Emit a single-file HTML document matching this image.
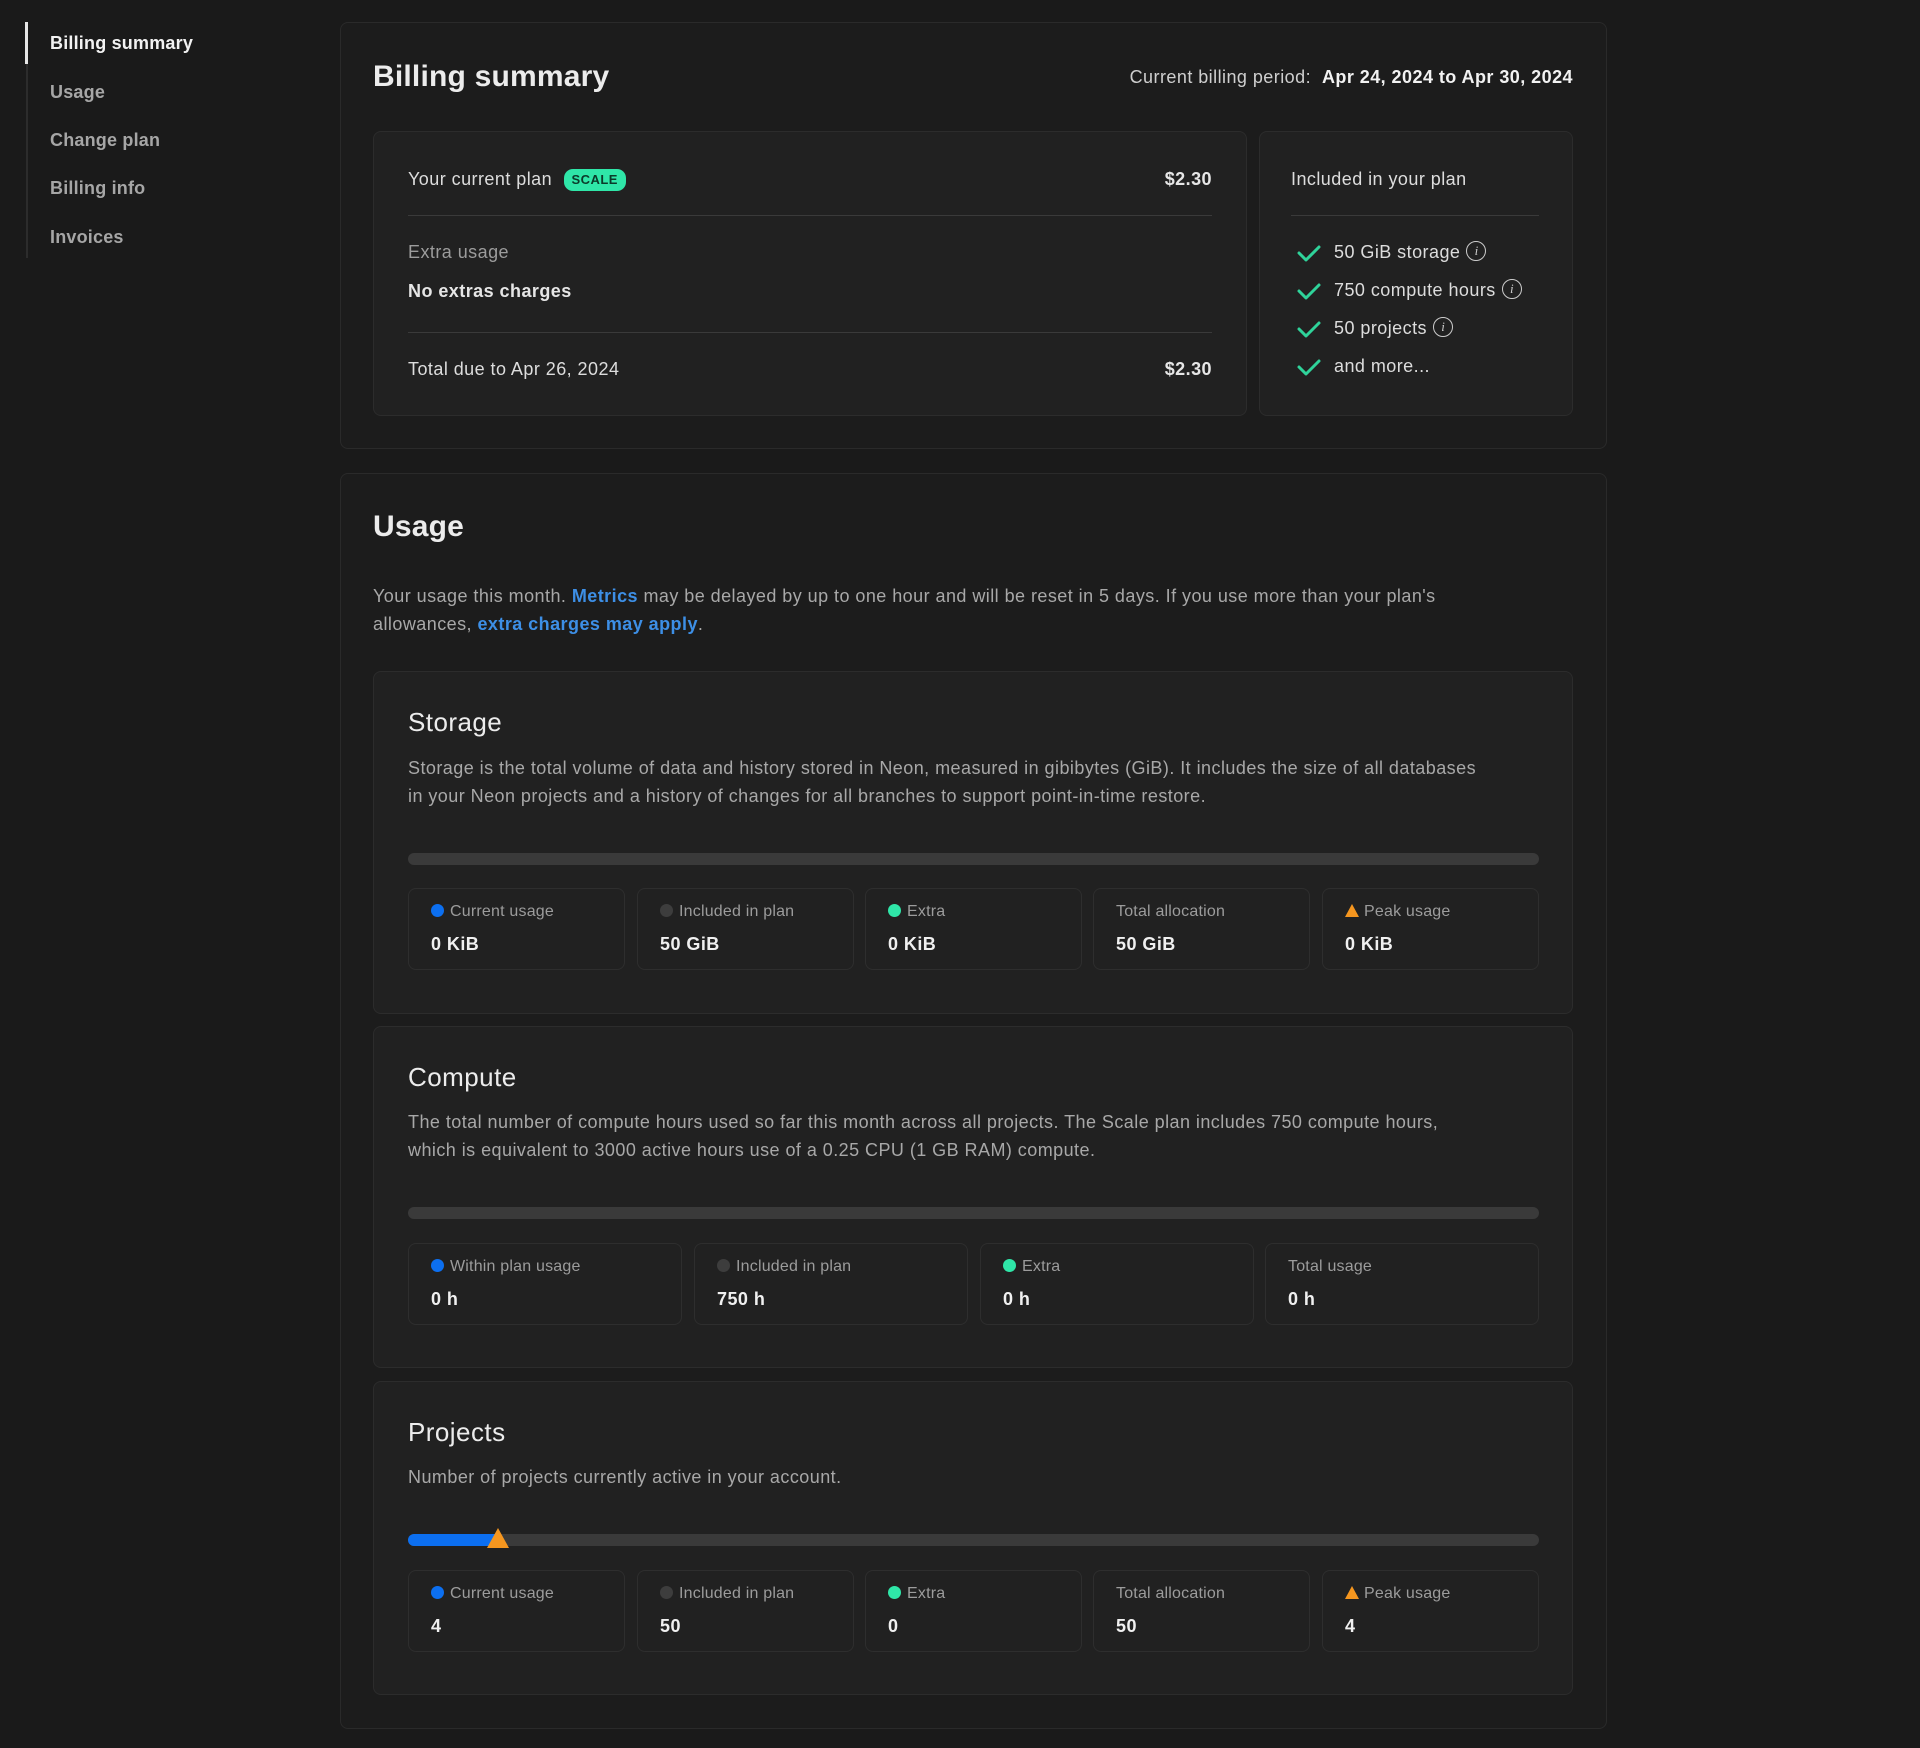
<!DOCTYPE html>
<html><head><meta charset="utf-8"><style>
*{box-sizing:border-box;margin:0;padding:0}
body{width:1920px;height:1748px;background:#1a1a1a;font-family:"Liberation Sans",sans-serif;color:#e6e6e6;position:relative;overflow:hidden;letter-spacing:0.45px}
.a{position:absolute}
.nav{left:26px;top:22px;width:2px;height:236px;background:#2c2c2c}
.navact{left:25px;top:22px;width:3px;height:42px;background:#e6e6e6}
.ni{left:50px;font-size:18px;font-weight:bold;color:#a6a6a6;line-height:22px;letter-spacing:0.2px}
.card{background:#1c1c1c;border:1px solid #2a2a2a;border-radius:8px}
.in{background:#212121;border:1px solid #2c2c2c;border-radius:8px}
.t{line-height:24px;white-space:nowrap}
.hr{height:1px;background:#3a3a3a}
.h2{font-size:30px;font-weight:bold;color:#ececec;letter-spacing:0.2px}
.h3{font-size:26px;color:#ececec}
.p{font-size:18px;color:#a8a8a8;line-height:28px;white-space:nowrap}
.p a{color:#3d8fe6;font-weight:bold;text-decoration:none}
.bar{height:12px;background:#3a3a3a;border-radius:6px;left:408px;width:1131px}
.box{background:#212121;border:1px solid #2e2e2e;border-radius:8px;height:82px}
.lb{position:absolute;left:22px;top:12px;font-size:16px;color:#9c9c9c;line-height:22px;white-space:nowrap;letter-spacing:0.2px}
.vl{position:absolute;left:22px;top:44px;font-size:18px;font-weight:bold;color:#f0f0f0;line-height:22px}
.d{display:inline-block;width:13px;height:13px;border-radius:50%;margin-right:6px;vertical-align:-1px}
.tri{display:inline-block;width:0;height:0;border-left:7px solid transparent;border-right:7px solid transparent;border-bottom:13px solid #f5961f;margin-right:5px;vertical-align:-1px}
.ii{display:inline-block;width:20px;height:20px;border:1.5px solid #ccc;border-radius:50%;font-size:13px;text-align:center;line-height:17px;font-style:italic;font-family:"Liberation Serif",serif;margin-left:6px;vertical-align:middle;position:relative;top:-2px;color:#ccc;letter-spacing:0}
</style></head><body>
<div class="a nav"></div><div class="a navact"></div>
<div class="a ni" style="top:32px;color:#f2f2f2">Billing summary</div>
<div class="a ni" style="top:81px">Usage</div>
<div class="a ni" style="top:129px">Change plan</div>
<div class="a ni" style="top:177px">Billing info</div>
<div class="a ni" style="top:226px">Invoices</div>

<div class="a card" style="left:340px;top:22px;width:1267px;height:427px"></div>
<div class="a t h2" style="left:373px;top:59px;line-height:36px">Billing summary</div>
<div class="a t" style="right:347px;top:65px;font-size:18px;color:#cfcfcf">Current billing period:&nbsp; <b style="color:#f2f2f2">Apr 24, 2024 to Apr 30, 2024</b></div>

<div class="a in" style="left:373px;top:131px;width:874px;height:285px"></div>
<div class="a t" style="left:408px;top:167px;font-size:18px;color:#ddd">Your current plan <span style="display:inline-block;background:#2fe6a8;color:#0b3a2a;font-size:13px;font-weight:bold;border-radius:9px;padding:0 8px;line-height:22px;margin-left:6px;vertical-align:1px">SCALE</span></div>
<div class="a t" style="right:708px;top:167px;font-size:18px;font-weight:bold">$2.30</div>
<div class="a hr" style="left:408px;top:215px;width:804px"></div>
<div class="a t" style="left:408px;top:240px;font-size:18px;color:#9c9c9c">Extra usage</div>
<div class="a t" style="left:408px;top:279px;font-size:18px;font-weight:bold">No extras charges</div>
<div class="a hr" style="left:408px;top:332px;width:804px"></div>
<div class="a t" style="left:408px;top:357px;font-size:18px;color:#ddd">Total due to Apr 26, 2024</div>
<div class="a t" style="right:708px;top:357px;font-size:18px;font-weight:bold">$2.30</div>

<div class="a in" style="left:1259px;top:131px;width:314px;height:285px"></div>
<div class="a t" style="left:1291px;top:167px;font-size:18px;color:#ddd">Included in your plan</div>
<div class="a hr" style="left:1291px;top:215px;width:248px"></div>
<svg class="a" style="left:1296px;top:240px" width="26" height="150" fill="none" stroke="#2fd39a" stroke-width="3" stroke-linecap="round" stroke-linejoin="round">
<path d="M3 13l7 7 13-13"/><path d="M3 51l7 7 13-13"/><path d="M3 89l7 7 13-13"/><path d="M3 127l7 7 13-13"/></svg>
<div class="a t" style="left:1334px;top:240px;font-size:18px;color:#ddd">50 GiB storage<span class="ii">i</span></div>
<div class="a t" style="left:1334px;top:278px;font-size:18px;color:#ddd">750 compute hours<span class="ii">i</span></div>
<div class="a t" style="left:1334px;top:316px;font-size:18px;color:#ddd">50 projects<span class="ii">i</span></div>
<div class="a t" style="left:1334px;top:354px;font-size:18px;color:#ddd">and more...</div>

<div class="a card" style="left:340px;top:473px;width:1267px;height:1256px"></div>
<div class="a t h2" style="left:373px;top:509px;line-height:36px">Usage</div>
<div class="a p" style="left:373px;top:582px">Your usage this month. <a>Metrics</a> may be delayed by up to one hour and will be reset in 5 days. If you use more than your plan's<br>allowances, <a>extra charges may apply</a>.</div>

<!-- Storage -->
<div class="a in" style="left:373px;top:671px;width:1200px;height:343px"></div>
<div class="a t h3" style="left:408px;top:706px;line-height:32px">Storage</div>
<div class="a p" style="left:408px;top:754px">Storage is the total volume of data and history stored in Neon, measured in gibibytes (GiB). It includes the size of all databases<br>in your Neon projects and a history of changes for all branches to support point-in-time restore.</div>
<div class="a bar" style="top:853px"></div>
<div class="a box" style="left:408px;top:888px;width:217px"><div class="lb"><span class="d" style="background:#0c6ff0"></span>Current usage</div><div class="vl">0 KiB</div></div>
<div class="a box" style="left:637px;top:888px;width:217px"><div class="lb"><span class="d" style="background:#3d3d3d"></span>Included in plan</div><div class="vl">50 GiB</div></div>
<div class="a box" style="left:865px;top:888px;width:217px"><div class="lb"><span class="d" style="background:#2fe6a8"></span>Extra</div><div class="vl">0 KiB</div></div>
<div class="a box" style="left:1093px;top:888px;width:217px"><div class="lb">Total allocation</div><div class="vl">50 GiB</div></div>
<div class="a box" style="left:1322px;top:888px;width:217px"><div class="lb"><span class="tri"></span>Peak usage</div><div class="vl">0 KiB</div></div>

<!-- Compute -->
<div class="a in" style="left:373px;top:1026px;width:1200px;height:342px"></div>
<div class="a t h3" style="left:408px;top:1061px;line-height:32px">Compute</div>
<div class="a p" style="left:408px;top:1108px">The total number of compute hours used so far this month across all projects. The Scale plan includes 750 compute hours,<br>which is equivalent to 3000 active hours use of a 0.25 CPU (1 GB RAM) compute.</div>
<div class="a bar" style="top:1207px"></div>
<div class="a box" style="left:408px;top:1243px;width:274px"><div class="lb"><span class="d" style="background:#0c6ff0"></span>Within plan usage</div><div class="vl">0 h</div></div>
<div class="a box" style="left:694px;top:1243px;width:274px"><div class="lb"><span class="d" style="background:#3d3d3d"></span>Included in plan</div><div class="vl">750 h</div></div>
<div class="a box" style="left:980px;top:1243px;width:274px"><div class="lb"><span class="d" style="background:#2fe6a8"></span>Extra</div><div class="vl">0 h</div></div>
<div class="a box" style="left:1265px;top:1243px;width:274px"><div class="lb">Total usage</div><div class="vl">0 h</div></div>

<!-- Projects -->
<div class="a in" style="left:373px;top:1381px;width:1200px;height:314px"></div>
<div class="a t h3" style="left:408px;top:1416px;line-height:32px">Projects</div>
<div class="a p" style="left:408px;top:1463px">Number of projects currently active in your account.</div>
<div class="a bar" style="top:1534px"></div>
<div class="a" style="left:408px;top:1534px;width:92px;height:12px;background:#0c6ff0;border-radius:6px 0 0 6px"></div>
<div class="a" style="left:487px;top:1528px;width:0;height:0;border-left:11px solid transparent;border-right:11px solid transparent;border-bottom:20px solid #f5961f"></div>
<div class="a box" style="left:408px;top:1570px;width:217px"><div class="lb"><span class="d" style="background:#0c6ff0"></span>Current usage</div><div class="vl">4</div></div>
<div class="a box" style="left:637px;top:1570px;width:217px"><div class="lb"><span class="d" style="background:#3d3d3d"></span>Included in plan</div><div class="vl">50</div></div>
<div class="a box" style="left:865px;top:1570px;width:217px"><div class="lb"><span class="d" style="background:#2fe6a8"></span>Extra</div><div class="vl">0</div></div>
<div class="a box" style="left:1093px;top:1570px;width:217px"><div class="lb">Total allocation</div><div class="vl">50</div></div>
<div class="a box" style="left:1322px;top:1570px;width:217px"><div class="lb"><span class="tri"></span>Peak usage</div><div class="vl">4</div></div>
</body></html>
